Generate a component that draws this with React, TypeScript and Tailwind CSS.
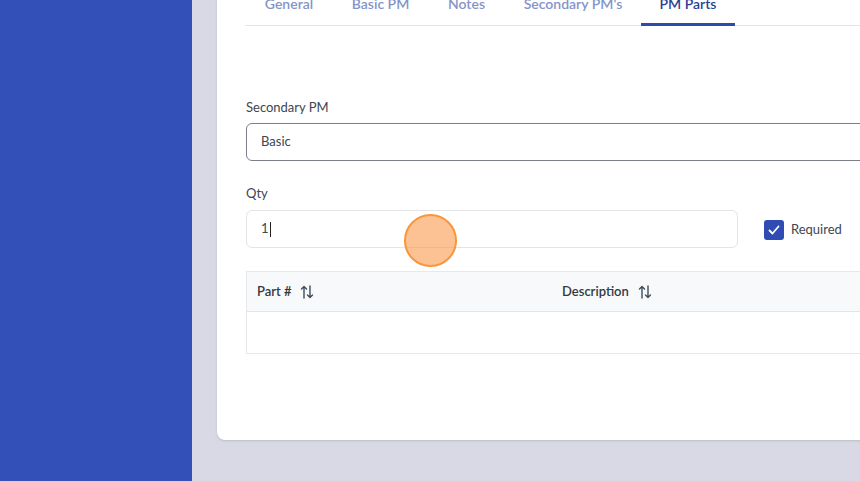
import React from 'react';

const tabs = [
  { label: 'General', w: 'w-[88px]' },
  { label: 'Basic PM', w: 'w-[95px]' },
  { label: 'Notes', w: 'w-[77px]' },
  { label: "Secondary PM's", w: 'w-[136px]' },
  { label: 'PM Parts', w: 'w-[94px]', active: true },
];

function SortIcon() {
  return (
    <svg width="14" height="14" viewBox="0 0 14 14" fill="none" stroke="#3f4d5a" strokeWidth="1.4" strokeLinecap="round" strokeLinejoin="round">
      {/* flecha arriba */}
      <path d="M4 13V1.5M1.5 4L4 1.5L6.5 4" />
      {/* flecha abajo */}
      <path d="M10 1V12.5M7.5 10L10 12.5L12.5 10" />
    </svg>
  );
}

export default function App() {
  return (
    <div className="flex h-[481px] w-[860px] overflow-hidden font-['Lato','Noto_Sans',sans-serif] text-[#3d4651]">
      {/* Sidebar */}
      <div className="w-[192px] shrink-0 bg-[#3350b9]" />

      {/* Contenido */}
      <div className="flex-1 bg-[#d8d9e5] pl-[25px] overflow-hidden">
        <div className="relative -mt-[20px] w-[700px] bg-white rounded-bl-lg shadow-sm pl-[28px] pb-[86px]">
          {/* Tabs */}
          <div className="flex border-b border-[#e3e5e9]">
            {tabs.map((t) => (
              <div
                key={t.label}
                className={`${t.w} h-[46px] pt-[14px] -mb-px text-center text-[14px] leading-5 font-semibold border-b-[3px] ${
                  t.active ? 'border-[#2f4aa8] text-[#2a3f94]' : 'border-transparent text-[#8494c9]'
                }`}
              >
                {t.label}
              </div>
            ))}
          </div>

          {/* Formulario */}
          <div className="pl-px">
            <label className="block mt-[71px] mb-[6px] text-[13px] leading-5 text-[#3d4651]">Secondary PM</label>
            <div className="h-[38px] w-[700px] rounded-md border border-[#7b8088] flex items-center pl-[14px] text-[13px]">
              Basic
            </div>

            <label className="block mt-[22px] mb-[7px] text-[13px] leading-5 text-[#3d4651]">Qty</label>
            <div className="flex items-center">
              <div className="relative h-[38px] w-[492px] rounded-md border border-[#e2e4e8] flex items-center pl-[14px] text-[13px]">
                1<span className="ml-px inline-block h-[15px] w-px bg-[#222]" />
                {/* indicador de clic */}
                <div className="absolute left-[157px] top-[3px] h-[53px] w-[53px] rounded-full border-2 border-[#f7963c] bg-[#fc9a4c]/60" />
              </div>
              <div className="ml-[26px] mt-[2px] flex items-center gap-[7px]">
                <div className="h-[20px] w-[20px] rounded-[3px] bg-[#2e4cb3] flex items-center justify-center">
                  <svg width="14" height="14" viewBox="0 0 14 14" fill="none" stroke="white" strokeWidth="1.8" strokeLinecap="round" strokeLinejoin="round">
                    <path d="M2.5 7.5L5.5 10.5L11.5 3.5" />
                  </svg>
                </div>
                <span className="text-[13px] text-[#3d4651]">Required</span>
              </div>
            </div>

            {/* Tabla */}
            <div className="mt-[23px] w-[700px] border border-[#e6e8eb]">
              <div className="flex h-[40px] items-center bg-[#f8f9fa] border-b border-[#e3e5e8] text-[13px] font-semibold text-[#343a40]">
                <div className="w-[305px] pl-[10px] flex items-center gap-[8px]">
                  Part # <SortIcon />
                </div>
                <div className="pl-[10px] flex items-center gap-[9px]">
                  Description <SortIcon />
                </div>
              </div>
              <div className="h-[41px]" />
            </div>
          </div>
        </div>
      </div>
    </div>
  );
}
